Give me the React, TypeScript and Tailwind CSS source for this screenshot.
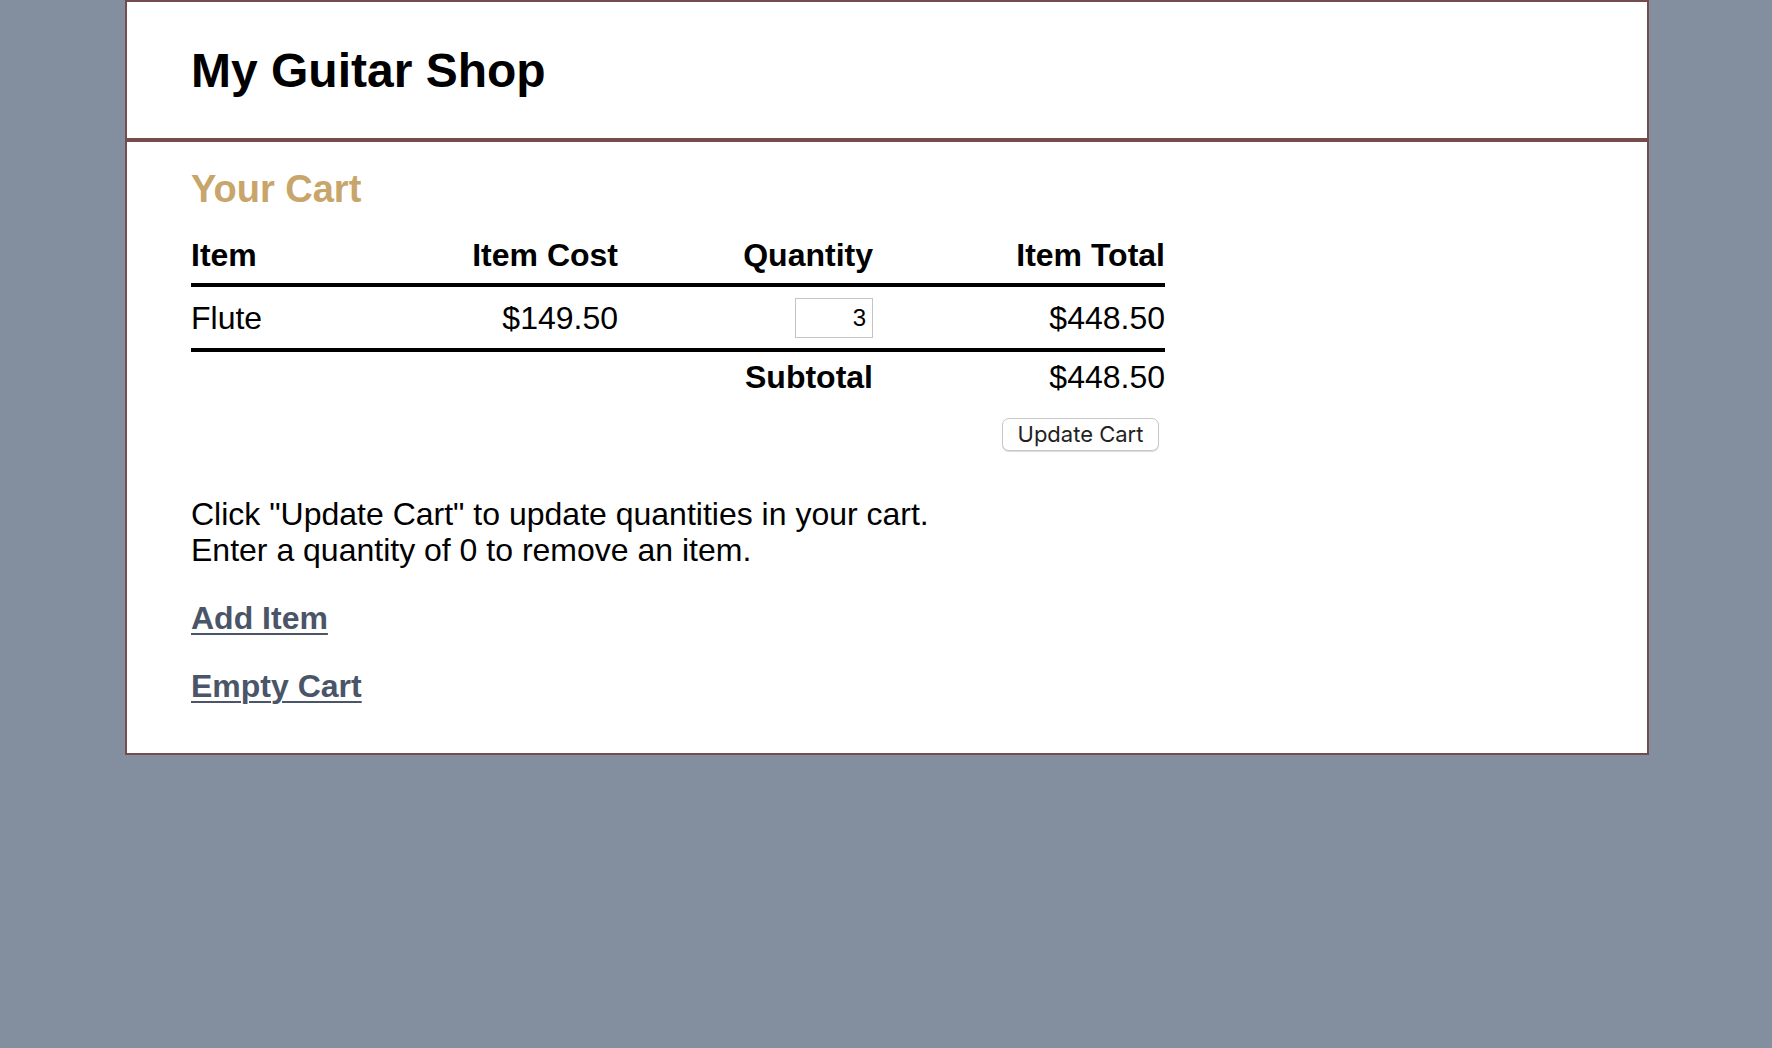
import React, { useState } from "react";

// cart rows for the table
interface CartItem {
  name: string;
  cost: number;
  quantity: number;
}

const ITEMS: CartItem[] = [{ name: "Flute", cost: 149.5, quantity: 3 }];

const money = (n: number) => `$${n.toFixed(2)}`;

const COLS = "grid grid-cols-[227px_200px_255px_292px]";

export default function App() {
  const [items, setItems] = useState<CartItem[]>(ITEMS);
  const subtotal = items.reduce((acc, it) => acc + it.cost * it.quantity, 0);

  return (
    <div className="min-h-[1048px] bg-[#838e9e] font-['Liberation_Sans',Arial,sans-serif] text-black">
      <div className="ml-[125px] w-[1524px] border-2 border-[#744c4c] bg-white">
        <header className="border-b-4 border-[#744c4c] pl-[64px] pt-[41px] pb-[40px]">
          <h1 className="text-[48px] font-bold leading-[55px]">My Guitar Shop</h1>
        </header>

        <main className="pl-[64px] pt-[26px] pb-[49px]">
          <h2 className="text-[38px] font-bold leading-[43px] text-[#c8a56a]">Your Cart</h2>

          <div className="mt-[26px] w-[974px] text-[32px] leading-[37px]">
            <div className={`${COLS} border-b-4 border-black pb-[9px] font-bold`}>
              <div>Item</div>
              <div className="text-right">Item Cost</div>
              <div className="text-right">Quantity</div>
              <div className="text-right">Item Total</div>
            </div>

            {items.map((it, i) => (
              <div key={it.name} className={`${COLS} items-center border-b-4 border-black pt-[11px] pb-[10px]`}>
                <div>{it.name}</div>
                <div className="text-right">{money(it.cost)}</div>
                <div className="flex justify-end">
                  <input
                    type="text"
                    value={it.quantity}
                    onChange={(e) => {
                      const q = parseInt(e.target.value) || 0;
                      setItems(items.map((x, j) => (j === i ? { ...x, quantity: q } : x)));
                    }}
                    className="h-[40px] w-[78px] border border-[#c4c4c4] bg-white pr-[6px] text-right font-['Liberation_Sans',Arial,sans-serif] text-[24px] leading-[24px] outline-none"
                  />
                </div>
                <div className="text-right">{money(it.cost * it.quantity)}</div>
              </div>
            ))}

            <div className={`${COLS} pt-[7px]`}>
              <div />
              <div />
              <div className="text-right font-bold">Subtotal</div>
              <div className="text-right">{money(subtotal)}</div>
            </div>

            <div className="mt-[22px] flex justify-end pr-[6px]">
              <button
                type="button"
                className="h-[33px] w-[157px] rounded-[7px] border border-[#c8c8c8] bg-white font-['Inter',sans-serif] text-[22px] leading-[31px] text-[#222] shadow-[0_1px_1px_rgba(0,0,0,0.15)]"
              >
                Update Cart
              </button>
            </div>
          </div>

          <p className="mt-[45px] text-[32px] leading-[36px]">
            Click "Update Cart" to update quantities in your cart.
            <br />
            Enter a quantity of 0 to remove an item.
          </p>

          <p className="mt-[32px] text-[32px] leading-[36px]">
            <a href="#" className="font-bold text-[#4a5568] underline decoration-2 underline-offset-[4px]">
              Add Item
            </a>
          </p>
          <p className="mt-[32px] text-[32px] leading-[36px]">
            <a href="#" className="font-bold text-[#4a5568] underline decoration-2 underline-offset-[4px]">
              Empty Cart
            </a>
          </p>
        </main>
      </div>
    </div>
  );
}
